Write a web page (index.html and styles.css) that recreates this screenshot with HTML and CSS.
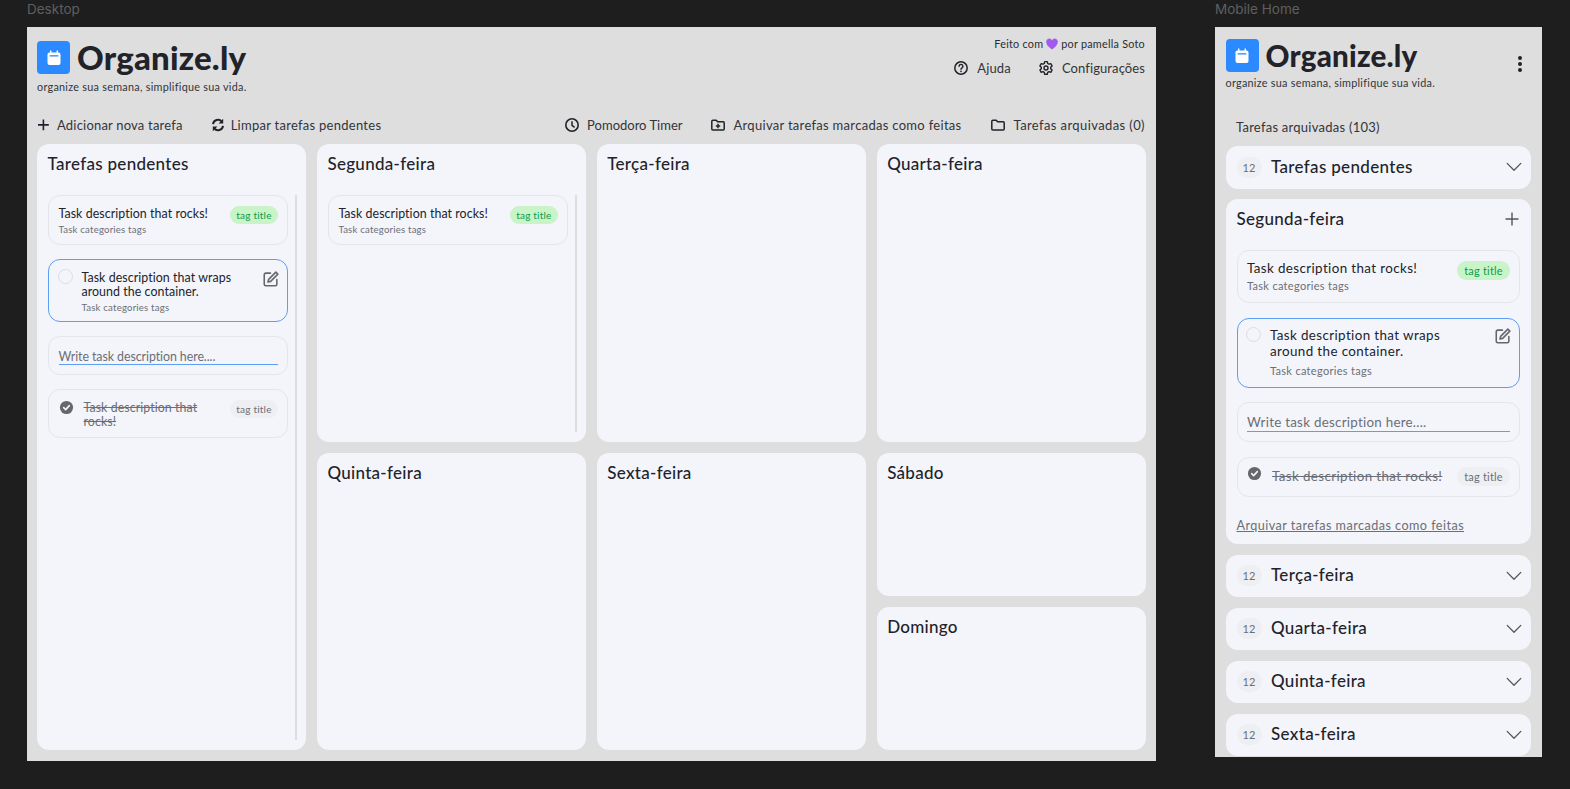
FILE: index.html
```html
<!DOCTYPE html>
<html lang="pt">
<head>
<meta charset="utf-8">
<title>Organize.ly</title>
<link rel="stylesheet" href="styles.css">
</head>
<body>
<svg class="defs" width="0" height="0" aria-hidden="true">
  <symbol id="i-cal" viewBox="0 0 20 20"><path fill="#fff" d="M6 2.5h1.4v2h5.2v-2H14v2h.6A1.9 1.9 0 0 1 16.5 6.4v8.7a1.9 1.9 0 0 1-1.9 1.9H5.4a1.9 1.9 0 0 1-1.9-1.9V6.4a1.9 1.9 0 0 1 1.9-1.9H6z"/><rect x="5.6" y="7.2" width="8.8" height="1.3" fill="#2b8aff"/></symbol>
  <symbol id="i-edit" viewBox="0 0 16 16"><path fill="none" stroke="currentColor" stroke-width="1.4" stroke-linecap="round" stroke-linejoin="round" d="M7.5 2.8H3.4A1.4 1.4 0 0 0 2 4.2v8.4A1.4 1.4 0 0 0 3.4 14h8.4a1.4 1.4 0 0 0 1.4-1.4V8.5M12.3 1.9l1.8 1.8-6.4 6.4-2.4.6.6-2.4z"/></symbol>
  <symbol id="i-check" viewBox="0 0 16 16"><circle cx="8" cy="8" r="7" fill="currentColor"/><path fill="none" stroke="#f3f5fa" stroke-width="1.7" stroke-linecap="round" stroke-linejoin="round" d="M5 8.2l2.1 2.1L11 6"/></symbol>
  <symbol id="i-chev" viewBox="0 0 16 16"><path fill="none" stroke="currentColor" stroke-width="1.3" stroke-linecap="round" stroke-linejoin="round" d="M1.2 4.4L8 11.2l6.8-6.8"/></symbol>
</svg>

<main class="canvas">
  <section class="frame-col frame-col-desktop">
    <div class="frame-label">Desktop</div>
    <div class="frame frame-desktop">
      <header class="top">
        <div class="brand">
          <div class="brand-row">
            <span class="logo"><svg class="logo-glyph"><use href="#i-cal"/></svg></span>
            <h1 class="brand-name">Organize.ly</h1>
          </div>
          <p class="tagline">organize sua semana, simplifique sua vida.</p>
        </div>
        <div class="top-right">
          <p class="credit">Feito com <svg class="heart" viewBox="0 0 12 12"><path fill="#a259f0" d="M6 11.6C2.2 8.6.2 6.6.2 4A3 3 0 0 1 6 2.6 3 3 0 0 1 11.8 4c0 2.6-2 4.6-5.8 7.6z"/></svg> por pamella Soto</p>
          <nav class="top-links">
            <a class="action action-help">
              <svg class="ic" viewBox="0 0 16 16"><circle cx="8" cy="8" r="6.2" fill="none" stroke="currentColor" stroke-width="1.5"/><path fill="none" stroke="currentColor" stroke-width="1.4" stroke-linecap="round" d="M6.1 6.3a1.9 1.9 0 1 1 2.9 1.6c-.7.4-1 .8-1 1.4"/><circle cx="8" cy="11.3" r=".85" fill="currentColor"/></svg>
              Ajuda</a>
            <a class="action action-config">
              <svg class="ic" viewBox="0 0 16 16"><path fill="none" stroke="currentColor" stroke-width="1.4" stroke-linejoin="round" d="M6.7 1.6h2.6l.4 1.9 1.3.7 1.8-.6 1.3 2.3-1.4 1.3v1.5l1.4 1.3-1.3 2.3-1.8-.6-1.3.7-.4 1.9H6.7l-.4-1.9-1.3-.7-1.8.6-1.3-2.3 1.4-1.3V7.2L1.9 5.9l1.3-2.3 1.8.6 1.3-.7z"/><circle cx="8" cy="8" r="2" fill="none" stroke="currentColor" stroke-width="1.4"/></svg>
              Configurações</a>
          </nav>
        </div>
      </header>

      <div class="toolbar">
        <div class="toolbar-group toolbar-group-left">
          <a class="action action-add"><svg class="ic" viewBox="0 0 16 16"><path fill="none" stroke="currentColor" stroke-width="1.6" d="M6.4 2.6v10.6M1 7.9h10.8"/></svg>Adicionar nova tarefa</a>
          <a class="action action-clear"><svg class="ic" viewBox="0 0 16 16"><path fill="none" stroke="currentColor" stroke-width="2" d="M3 7.2A5 5 0 0 1 11.8 4.6M13 8.8A5 5 0 0 1 4.2 11.4"/><path fill="currentColor" d="M13.2 1.8v4.6H8.6zM2.8 14.2V9.6h4.6z"/></svg>Limpar tarefas pendentes</a>
        </div>
        <div class="toolbar-group toolbar-group-right">
          <a class="action action-timer"><svg class="ic" viewBox="0 0 16 16"><circle cx="8" cy="8" r="6.2" fill="none" stroke="currentColor" stroke-width="1.6"/><path fill="none" stroke="currentColor" stroke-width="1.5" d="M8 4.2V8.4l2.6 2"/></svg>Pomodoro Timer</a>
          <a class="action action-archive"><svg class="ic" viewBox="0 0 16 16"><path fill="none" stroke="currentColor" stroke-width="1.5" stroke-linejoin="round" d="M1.8 4.2c0-.6.4-1 1-1h3.4l1.4 1.6h5.6c.6 0 1 .4 1 1v6.2c0 .6-.4 1-1 1H2.8c-.6 0-1-.4-1-1z"/><path fill="none" stroke="currentColor" stroke-width="1.5" d="M8 6.8v4.4M5.8 9H10.2"/></svg>Arquivar tarefas marcadas como feitas</a>
          <a class="action action-folder"><svg class="ic" viewBox="0 0 16 16"><path fill="none" stroke="currentColor" stroke-width="1.5" stroke-linejoin="round" d="M1.8 4.2c0-.6.4-1 1-1h3.4l1.4 1.6h5.6c.6 0 1 .4 1 1v6.2c0 .6-.4 1-1 1H2.8c-.6 0-1-.4-1-1z"/></svg>Tarefas arquivadas (0)</a>
        </div>
      </div>

      <div class="board">
        <article class="panel panel-pending">
          <h2 class="panel-title">Tarefas pendentes</h2>
          <div class="task-list">
            <div class="task task-plain">
              <div class="task-body">
                <p class="task-text">Task description that rocks!</p>
                <p class="task-meta">Task categories tags</p>
              </div>
              <span class="tag tag-green">tag title</span>
            </div>
            <div class="task task-active">
              <span class="radio"></span>
              <div class="task-body">
                <p class="task-text">Task description that wraps around the container.</p>
                <p class="task-meta">Task categories tags</p>
              </div>
              <svg class="edit"><use href="#i-edit"/></svg>
            </div>
            <div class="task task-input"><span class="input-line">Write task description here....</span></div>
            <div class="task task-done">
              <svg class="check"><use href="#i-check"/></svg>
              <p class="task-text task-struck">Task description that rocks!</p>
              <span class="tag tag-gray">tag title</span>
            </div>
          </div>
        </article>

        <article class="panel panel-mon">
          <h2 class="panel-title">Segunda-feira</h2>
          <div class="task-list">
            <div class="task task-plain">
              <div class="task-body">
                <p class="task-text">Task description that rocks!</p>
                <p class="task-meta">Task categories tags</p>
              </div>
              <span class="tag tag-green">tag title</span>
            </div>
          </div>
        </article>
        <article class="panel panel-tue"><h2 class="panel-title">Terça-feira</h2></article>
        <article class="panel panel-wed"><h2 class="panel-title">Quarta-feira</h2></article>
        <article class="panel panel-thu"><h2 class="panel-title">Quinta-feira</h2></article>
        <article class="panel panel-fri"><h2 class="panel-title">Sexta-feira</h2></article>
        <div class="weekend">
          <article class="panel panel-sat"><h2 class="panel-title">Sábado</h2></article>
          <article class="panel panel-sun"><h2 class="panel-title">Domingo</h2></article>
        </div>
      </div>
    </div>
  </section>

  <section class="frame-col frame-col-mobile">
    <div class="frame-label">Mobile Home</div>
    <div class="frame frame-mobile">
      <header class="m-top">
        <div class="brand">
          <div class="brand-row">
            <span class="logo"><svg class="logo-glyph"><use href="#i-cal"/></svg></span>
            <h1 class="brand-name">Organize.ly</h1>
          </div>
          <p class="tagline">organize sua semana, simplifique sua vida.</p>
        </div>
        <svg class="kebab" viewBox="0 0 6 18"><circle cx="3" cy="3" r="2" fill="currentColor"/><circle cx="3" cy="9" r="2" fill="currentColor"/><circle cx="3" cy="15" r="2" fill="currentColor"/></svg>
      </header>
      <p class="m-archived">Tarefas arquivadas (103)</p>
      <div class="m-stack">
        <div class="m-row"><span class="count">12</span><span class="m-row-title">Tarefas pendentes</span><svg class="chev"><use href="#i-chev"/></svg></div>

        <div class="m-open">
          <div class="m-open-head">
            <h2 class="m-open-title">Segunda-feira</h2>
            <svg class="m-plus" viewBox="0 0 16 16"><path fill="none" stroke="currentColor" stroke-width="1.4" d="M8 1.5v13M1.5 8h13"/></svg>
          </div>
          <div class="m-tasks">
            <div class="task task-plain m-task">
              <div class="task-body">
                <p class="task-text">Task description that rocks!</p>
                <p class="task-meta">Task categories tags</p>
              </div>
              <span class="tag tag-green">tag title</span>
            </div>
            <div class="task task-active m-task">
              <span class="radio"></span>
              <div class="task-body">
                <p class="task-text">Task description that wraps around the container.</p>
                <p class="task-meta">Task categories tags</p>
              </div>
              <svg class="edit"><use href="#i-edit"/></svg>
            </div>
            <div class="task task-input m-task"><span class="input-line">Write task description here....</span></div>
            <div class="task task-done m-task">
              <svg class="check"><use href="#i-check"/></svg>
              <p class="task-text task-struck">Task description that rocks!</p>
              <span class="tag tag-gray">tag title</span>
            </div>
          </div>
          <a class="m-link">Arquivar tarefas marcadas como feitas</a>
        </div>

        <div class="m-row"><span class="count">12</span><span class="m-row-title">Terça-feira</span><svg class="chev"><use href="#i-chev"/></svg></div>
        <div class="m-row"><span class="count">12</span><span class="m-row-title">Quarta-feira</span><svg class="chev"><use href="#i-chev"/></svg></div>
        <div class="m-row"><span class="count">12</span><span class="m-row-title">Quinta-feira</span><svg class="chev"><use href="#i-chev"/></svg></div>
        <div class="m-row"><span class="count">12</span><span class="m-row-title">Sexta-feira</span><svg class="chev"><use href="#i-chev"/></svg></div>
      </div>
    </div>
  </section>
</main>
</body>
</html>
```

FILE: styles.css
```css
* { box-sizing: border-box; }
html, body { margin: 0; height: 789px; overflow: hidden; }
body {
  background: #1e1e1e;
  color: #22232a;
  font-family: "Lato", "Open Sans", sans-serif;
}
h1, h2, p { margin: 0; font-weight: 400; }
.defs { display: block; position: absolute; }

.canvas { display: flex; gap: 59px; padding-left: 27px; }
.frame-col { display: flex; flex-direction: column; }
.frame-col-desktop { width: 1129px; }
.frame-col-mobile { width: 327px; }
.frame-label {
  height: 27px;
  padding-top: 1px;
  font-family: "Inter", sans-serif;
  font-size: 13.5px;
  line-height: 16px;
  color: #5f5f5f;
}
.frame { background: #dedede; overflow: hidden; }
.frame-desktop { height: 734px; padding: 0 10px; }
.frame-mobile { height: 730px; padding: 0 10.5px; }

/* brand */
.brand-row { display: flex; align-items: center; gap: 7px; }
.logo {
  width: 33px; height: 33px; border-radius: 4px;
  background: #2b8aff;
  display: flex; align-items: center; justify-content: center;
  flex: none;
}
.logo-glyph { width: 20px; height: 20px; }
.brand-name { font-size: 33px; line-height: 33px; font-weight: 900; letter-spacing: .2px; color: #22232a; }
.tagline { font-size: 10.8px; line-height: 13px; margin-top: 6px; color: #33343a; letter-spacing: .28px; }

/* desktop header */
.top { display: flex; justify-content: space-between; height: 75px; padding-top: 14px; }
.top-right { display: flex; flex-direction: column; align-items: flex-end; margin-top: -4px; }
.credit { font-size: 10.8px; line-height: 14px; display: flex; align-items: center; gap: 3px; color: #2a2b30; letter-spacing: .25px; margin-right: 1px; }
.heart { width: 12px; height: 12px; }
.top-links { display: flex; gap: 27px; margin-top: 9px; margin-right: 1px; }

.action { display: flex; align-items: center; gap: 7px; font-size: 13px; line-height: 16px; color: #33343a; letter-spacing: .35px; white-space: nowrap; }
.ic { width: 16px; height: 16px; color: #22232a; flex: none; }
.action-help { letter-spacing: .15px; gap: 8px; }
.action-config { letter-spacing: .1px; gap: 8px; }
.action-add { letter-spacing: .2px; gap: 4px; }
.action-clear { letter-spacing: .27px; gap: 5px; }
.action-timer { letter-spacing: 0; }
.action-archive { letter-spacing: .3px; }
.action-folder { letter-spacing: .4px; gap: 8px; }

.toolbar { display: flex; justify-content: space-between; align-items: flex-start; height: 42px; padding-top: 15px; }
.toolbar-group { display: flex; gap: 28px; }
.toolbar-group-left { gap: 27px; }
.toolbar-group-right { margin-right: 1px; }

/* board */
.board {
  display: grid;
  grid-template-columns: repeat(4, minmax(0, 1fr));
  grid-template-rows: 297.5px 297.5px;
  gap: 11px 10.5px;
  height: 606px;
}
.panel {
  background: #f3f5fa;
  border-radius: 12px;
  padding: 8px 9px 10px 10.5px;
  display: flex;
  flex-direction: column;
  min-height: 0;
}
.panel-pending { grid-row: 1 / span 2; }
.panel-mon { grid-column: 2; grid-row: 1; }
.panel-tue { grid-column: 3; grid-row: 1; }
.panel-wed { grid-column: 4; grid-row: 1; }
.panel-thu { grid-column: 2; grid-row: 2; }
.panel-fri { grid-column: 3; grid-row: 2; }
.weekend { grid-column: 4; grid-row: 2; display: grid; grid-template-rows: 1fr 1fr; gap: 11px; min-height: 0; }
.panel-title { font-size: 17px; line-height: 24px; font-weight: 500; letter-spacing: .3px; color: #22232a; flex: none; }

.task-list {
  flex: 1;
  margin: 19px 0 0 .5px;
  padding-right: 7px;
  border-right: 2px solid #dedede;
  display: flex; flex-direction: column; gap: 14px;
  width: 249px;
}

/* tasks */
.task {
  border: 1.5px solid #e4e5e9;
  border-radius: 12px;
  display: flex;
  flex: none;
}
.task-plain { height: 50px; padding: 11px 9px 0 9.5px; justify-content: space-between; }
.task-active { height: 63px; padding: 11px 9px 0 8.5px; border-color: #5c9ef5; gap: 9px; }
.task-input { height: 39px; padding: 13px 9.5px 0; }
.task-done { height: 49px; padding: 11px 9px 0 9.5px; gap: 10px; }
.task-body { flex: 1; min-width: 0; }
.task-plain .task-body { flex: none; }
.task-text { font-size: 12.4px; line-height: 14px; color: #22232a; letter-spacing: .06px; }
.task-meta { font-size: 9.6px; line-height: 12px; margin-top: 3px; color: #6c6e76; letter-spacing: .2px; }
.task-active .task-text { max-width: 160px; }
.task-struck { flex: 1; min-width: 0; color: #6c6e76; text-decoration: line-through; }
.input-line {
  display: block; width: 100%;
  font-size: 12.4px; line-height: 14px; height: 15px;
  color: #6c6e76; letter-spacing: -.07px;
  border-bottom: 1.5px solid #5c9ef5;
}
.tag {
  flex: none;
  width: 48px; height: 18px; border-radius: 9px;
  font-size: 10px; line-height: 18px; text-align: center;
  letter-spacing: .2px;
  margin-top: -1px;
}
.tag-green { background: #c9f4c7; color: #0c9a50; }
.tag-gray { background: #eeeff2; color: #6c6e76; }
.radio {
  width: 15px; height: 15px; flex: none;
  border: 1.5px solid #dcdde0; border-radius: 50%;
  margin-top: -2px;
}
.edit { width: 18px; height: 18px; flex: none; color: #66676c; margin: -1px -2px 0 0; }
.check { width: 15px; height: 15px; flex: none; color: #66676c; margin-top: -1px; }

/* mobile */
.m-top { display: flex; justify-content: space-between; height: 74px; padding-top: 12px; }
.frame-mobile .brand-name { font-size: 29.6px; }
.frame-mobile .tagline { margin-top: 4px; }
.kebab { width: 6px; height: 18px; margin: 16px 9px 0 0; color: #22232a; flex: none; }
.m-archived { height: 45px; padding: 18px 0 0 10.5px; font-size: 13px; line-height: 16px; letter-spacing: .25px; color: #33343a; }
.m-stack { display: flex; flex-direction: column; gap: 10.5px; width: 305.5px; }
.m-row {
  height: 42.5px; flex: none;
  background: #f3f5fa; border-radius: 12px;
  display: flex; align-items: center;
  padding: 0 9px 0 11px;
}
.count {
  width: 25px; height: 21px; border-radius: 11px;
  background: #eeeff2; color: #6c6e76;
  font-size: 11px; line-height: 21px; text-align: center; flex: none;
}
.m-row-title { flex: 1; margin-left: 9.5px; padding-bottom: 2px; font-size: 17px; font-weight: 500; letter-spacing: .33px; color: #22232a; }
.chev { width: 16px; height: 16px; color: #55565c; flex: none; }
.m-open { height: 345px; flex: none; background: #f3f5fa; border-radius: 12px; padding: 0 11px; }
.m-open-head { height: 51px; display: flex; align-items: center; justify-content: space-between; padding-bottom: 12px; }
.m-open-title { font-size: 17px; font-weight: 500; letter-spacing: .3px; color: #22232a; }
.m-plus { width: 16px; height: 16px; color: #55565c; }
.m-tasks { display: flex; flex-direction: column; gap: 14.5px; }
.m-task .task-text { font-size: 13.4px; line-height: 16px; letter-spacing: .38px; }
.m-task .task-meta { font-size: 11px; line-height: 14px; margin-top: 3px; letter-spacing: .3px; }
.m-task.task-plain { height: 53px; padding-top: 9px; }
.m-task.task-plain .tag { margin-top: 1px; }
.m-task.task-active { height: 70px; padding-top: 8px; }
.m-task.task-active .task-text { max-width: 190px; }
.m-task.task-active .task-meta { margin-top: 5px; }
.m-task .radio, .m-task .edit { margin-top: 0; }
.m-task.task-input { height: 40px; padding-top: 11px; }
.m-task .input-line { font-size: 13.4px; line-height: 16px; height: 18px; letter-spacing: .25px; }
.m-task.task-done { height: 40.5px; padding-top: 9px; align-items: flex-start; }
.m-task .tag { width: 53px; height: 19px; line-height: 19px; font-size: 11px; border-radius: 10px; }
.m-task.task-done .tag { margin-top: 0; }
.m-task.task-done .task-text { padding-top: 1px; white-space: nowrap; }
.m-link { display: block; margin-top: 21px; font-size: 12.6px; line-height: 15px; color: #6c6e76; text-decoration: underline; letter-spacing: .47px; }
```
